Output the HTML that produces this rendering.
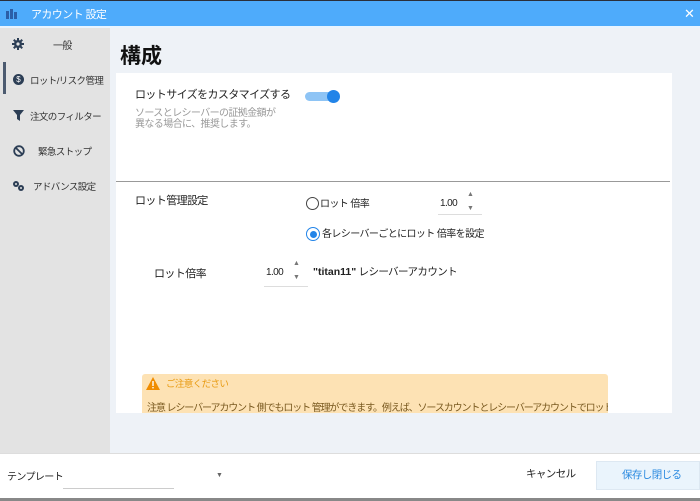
<!DOCTYPE html>
<html><head><meta charset="utf-8"><style>
*{margin:0;padding:0;box-sizing:border-box}
body{width:700px;height:501px;overflow:hidden;font-family:"Liberation Sans","Noto Sans CJK JP",sans-serif;background:#eef2f7;position:relative;color:#222}
.a{position:absolute}
.t{font-size:10px;white-space:nowrap;letter-spacing:-0.6px}
</style></head><body>
<div class="a" style="left:0;top:0;width:700px;height:1px;background:#2a2f3a"></div>
<div class="a" style="left:0;top:1px;width:700px;height:25px;background:#4eabfb"></div>
<div class="a" style="left:0;top:26px;width:700px;height:2px;background:#e8f4ff"></div>
<svg class="a" style="left:5px;top:8px" width="13" height="12"><rect x="1" y="3" width="3" height="8" fill="#2b5fa8"/><rect x="5" y="1" width="3" height="10" fill="#2b5fa8"/><rect x="9" y="4" width="3" height="7" fill="#2b5fa8"/></svg>
<div class="a t" style="left:31px;top:6px;color:#fff;font-size:11px">アカウント 設定</div>
<div class="a" style="left:684px;top:6px;color:#fff;font-size:13px">✕</div>
<!-- sidebar -->
<div class="a" style="left:0;top:28px;width:110px;height:425px;background:#e3e3e3"></div>
<div class="a" style="left:3px;top:62px;width:3px;height:32px;background:#4c5b70"></div>
<svg class="a" style="left:12px;top:38px" width="12" height="12"><g fill="#2c3e55"><circle cx="6" cy="6" r="4"/><rect x="5" y="0" width="2" height="12"/><rect x="0" y="5" width="12" height="2"/><rect x="5" y="0" width="2" height="12" transform="rotate(45 6 6)"/><rect x="5" y="0" width="2" height="12" transform="rotate(-45 6 6)"/></g><circle cx="6" cy="6" r="1.6" fill="#e3e3e3"/></svg>
<div class="a t" style="left:53px;top:37px;color:#333">一般</div>
<div class="a" style="left:13px;top:74px;width:11px;height:11px;border-radius:50%;background:#2c3e55;color:#fff;font-size:8px;text-align:center;line-height:11px">$</div>
<div class="a t" style="left:30px;top:73px;color:#333;font-size:9.5px">ロット/リスク管理</div>
<svg class="a" style="left:13px;top:110px" width="11" height="11"><path d="M0 0H11L7 5V11L4 9V5Z" fill="#2c3e55"/></svg>
<div class="a t" style="left:30px;top:109px;color:#333;font-size:9.5px">注文のフィルター</div>
<svg class="a" style="left:13px;top:145px" width="12" height="12"><circle cx="6" cy="6" r="4.8" fill="none" stroke="#2c3e55" stroke-width="1.8"/><path d="M2.6 2.6L9.4 9.4" stroke="#2c3e55" stroke-width="1.8"/></svg>
<div class="a t" style="left:38px;top:144px;color:#333;font-size:9.5px">緊急ストップ</div>
<svg class="a" style="left:12px;top:180px" width="13" height="12"><circle cx="4" cy="4" r="3" fill="#2c3e55"/><circle cx="9" cy="8" r="3" fill="#2c3e55"/><circle cx="4" cy="4" r="1" fill="#e3e3e3"/><circle cx="9" cy="8" r="1" fill="#e3e3e3"/></svg>
<div class="a t" style="left:33px;top:179px;color:#333;font-size:9.5px">アドバンス設定</div>
<!-- main -->
<div class="a" style="left:120px;top:40px;font-size:21px;font-weight:bold;color:#111">構成</div>
<div class="a" style="left:116px;top:73px;width:556px;height:340px;background:#fff"></div>
<div class="a t" style="left:135px;top:86px;font-size:11px">ロットサイズをカスタマイズする</div>
<div class="a t" style="left:135px;top:108px;color:#999;line-height:11px">ソースとレシーバーの証拠金額が<br>異なる場合に、推奨します。</div>
<div class="a" style="left:305px;top:92px;width:33px;height:9px;border-radius:5px;background:#8ec4f5"></div>
<div class="a" style="left:327px;top:90px;width:13px;height:13px;border-radius:50%;background:#2284e8"></div>
<div class="a" style="left:116px;top:181px;width:554px;height:1px;background:#999"></div>
<div class="a t" style="left:135px;top:192px;font-size:11px">ロット管理設定</div>
<div class="a" style="left:306px;top:197px;width:13px;height:13px;border-radius:50%;border:1.3px solid #444"></div>
<div class="a t" style="left:320px;top:195px">ロット 倍率</div>
<div class="a t" style="left:440px;top:198px">1.00</div>
<div class="a t" style="left:467px;top:191px;font-size:7px;color:#777">▲</div>
<div class="a t" style="left:467px;top:205px;font-size:7px;color:#777">▼</div>
<div class="a" style="left:438px;top:214px;width:44px;height:1px;background:#ddd"></div>
<div class="a" style="left:306px;top:227px;width:14px;height:14px;border-radius:50%;border:1.3px solid #2284e8"></div>
<div class="a" style="left:309.5px;top:230.5px;width:7px;height:7px;border-radius:50%;background:#2284e8"></div>
<div class="a t" style="left:322px;top:225px">各レシーバーごとにロット 倍率を設定</div>
<div class="a t" style="left:154px;top:265px;font-size:11px">ロット倍率</div>
<div class="a t" style="left:266px;top:267px">1.00</div>
<div class="a t" style="left:293px;top:260px;font-size:7px;color:#777">▲</div>
<div class="a t" style="left:293px;top:274px;font-size:7px;color:#777">▼</div>
<div class="a" style="left:264px;top:286px;width:44px;height:1px;background:#ddd"></div>
<div class="a t" style="left:313px;top:264px;font-size:10.5px"><b style="letter-spacing:0">"titan11"</b> レシーバーアカウント</div>
<div class="a" style="left:142px;top:374px;width:466px;height:39px;background:#fde2b4;border-radius:3px 3px 0 0;overflow:hidden">
<svg class="a" style="left:4px;top:3px" width="14" height="13"><path d="M7 0L14 13H0Z" fill="#f08c00"/><rect x="6.3" y="4" width="1.4" height="5" fill="#fff"/><rect x="6.3" y="10" width="1.4" height="1.4" fill="#fff"/></svg>
<div class="a t" style="left:24px;top:2px;color:#e89a10;font-size:9.5px">ご注意ください</div>
<div class="a t" style="left:5px;top:25px;color:#7a5a20;font-size:10px;letter-spacing:-1.1px">注意  レシーバーアカウント 側でもロット 管理ができます。例えば、ソースカウントとレシーバーアカウントでロット 倍</div>
</div>
<!-- footer -->
<div class="a" style="left:0;top:453px;width:700px;height:45px;background:#fff;border-top:1px solid #ddd"></div>
<div class="a" style="left:0;top:498px;width:700px;height:3px;background:#888"></div>
<div class="a t" style="left:7px;top:468px;font-size:10px">テンプレート</div>
<div class="a t" style="left:216px;top:472px;font-size:7px;color:#666">▼</div>
<div class="a" style="left:63px;top:488px;width:111px;height:1px;background:#ccc"></div>
<div class="a t" style="left:526px;top:466px;font-size:10.5px">キャンセル</div>
<div class="a" style="left:596px;top:461px;width:104px;height:29px;background:#eaf4fc;border:1px solid #dde8f2"></div>
<div class="a t" style="left:622px;top:467px;color:#2b8ae0;font-size:10.5px">保存し閉じる</div>
</body></html>
